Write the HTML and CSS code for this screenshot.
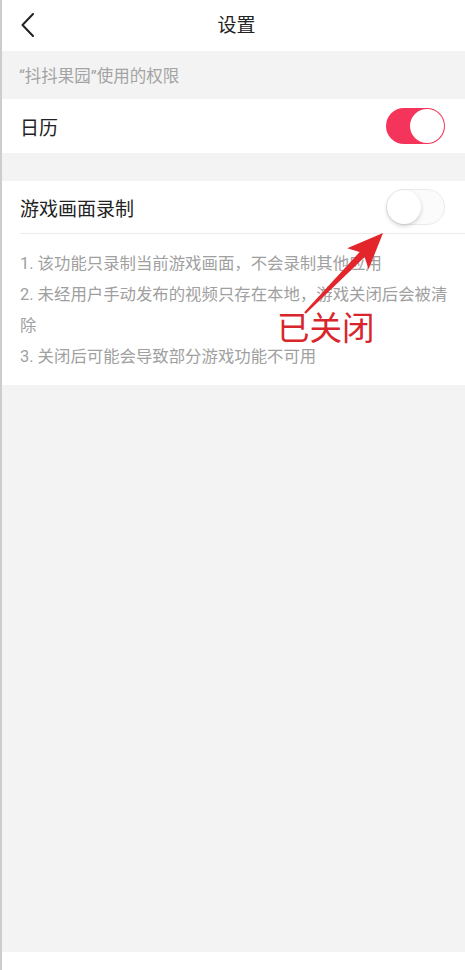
FILE: index.html
```html
<!DOCTYPE html>
<html lang="zh-CN">
<head>
<meta charset="utf-8">
<title>设置</title>
<link rel="stylesheet" href="styles.css">
</head>
<body>
<div class="screen">
  <div class="page">
    <header class="topbar">
      <svg class="back" width="14" height="24" viewBox="0 0 14 24"><path d="M12 1 L1.5 12 L12 23" fill="none" stroke="#222" stroke-width="2" stroke-linecap="round" stroke-linejoin="round"/></svg>
      <h1 class="title">设置</h1>
    </header>
    <div class="section-title">“抖抖果园”使用的权限</div>
    <div class="row">
      <span class="label">日历</span>
      <span class="switch on"><span class="knob"></span></span>
    </div>
    <div class="gap"></div>
    <div class="card">
      <div class="row row-divided">
        <span class="label">游戏画面录制</span>
        <span class="switch off"><span class="knob"></span></span>
      </div>
      <div class="notes">
        <p>1. 该功能只录制当前游戏画面，不会录制其他应用</p>
        <p>2. 未经用户手动发布的视频只存在本地，游戏关闭后会被清除</p>
        <p>3. 关闭后可能会导致部分游戏功能不可用</p>
      </div>
    </div>
  </div>
  <div class="footer-strip"></div>
  <svg class="arrow" width="465" height="400" viewBox="0 0 465 400">
    <polygon fill="#e3262c" points="383,233 368.6,269.3 364.6,256.9 305.8,313.8 304.2,312.2 359.6,252.1 347.2,248.3"/>
  </svg>
  <div class="annotation">已关闭</div>
</div>
</body>
</html>
```
FILE: styles.css
```css
html, body {
  margin: 0;
  padding: 0;
  background: #ffffff;
}
body {
  font-family: Roboto, "Noto Sans CJK SC", sans-serif;
}
.screen {
  position: relative;
  width: 463px;
  height: 970px;
  border-left: 2px solid #cdcdcd;
  display: flex;
  flex-direction: column;
  overflow: hidden;
}
.page {
  height: 952px;
  background: #f3f3f3;
  display: flex;
  flex-direction: column;
}
.footer-strip {
  flex: 1;
  background: #ffffff;
}
.topbar {
  height: 51px;
  background: #ffffff;
  display: flex;
  align-items: center;
  justify-content: center;
  position: relative;
}
.back {
  position: absolute;
  left: 19px;
  top: 13px;
}
.title {
  margin: 0;
  font-size: 19px;
  font-weight: normal;
  color: #222222;
  line-height: 1;
  padding-left: 6px;
}
.section-title {
  height: 48px;
  display: flex;
  align-items: center;
  padding-left: 17px;
  font-size: 16.5px;
  color: #a3a3a3;
}
.row {
  height: 54px;
  background: #ffffff;
  display: flex;
  align-items: center;
  justify-content: space-between;
  padding: 0 20px 0 18px;
}
.label {
  font-size: 19px;
  color: #222222;
}
.gap {
  height: 28px;
}
.card {
  background: #ffffff;
}
.row-divided {
  height: 52px;
  position: relative;
  padding-bottom: 1px;
}
.row-divided::after {
  content: "";
  position: absolute;
  left: 18px;
  right: 0;
  bottom: 0;
  height: 1px;
  background: #ececec;
}
.switch {
  position: relative;
  width: 59px;
  height: 36px;
  border-radius: 18px;
  box-sizing: border-box;
  display: block;
}
.switch .knob {
  position: absolute;
  top: 1px;
  width: 34px;
  height: 34px;
  border-radius: 50%;
  background: #ffffff;
}
.switch.on {
  background: #f4345a;
}
.switch.on .knob {
  right: 1px;
}
.switch.off {
  background: #fbfbfb;
  border: 1px solid #ebebeb;
}
.switch.off .knob {
  top: 0;
  left: 0;
  box-shadow: 0 2px 4px rgba(0, 0, 0, 0.18);
}
.notes {
  padding: 14px 8px 13px 18px;
  font-size: 16.4px;
  line-height: 31px;
  color: #a0a0a0;
}
.notes p {
  margin: 0;
}
.arrow {
  position: absolute;
  left: -2px;
  top: 0;
}
.annotation {
  position: absolute;
  left: 275px;
  top: 310px;
  font-family: "Noto Sans CJK SC", sans-serif;
  font-size: 32.5px;
  line-height: 1;
  color: #d8262c;
  font-weight: 400;
}
```
